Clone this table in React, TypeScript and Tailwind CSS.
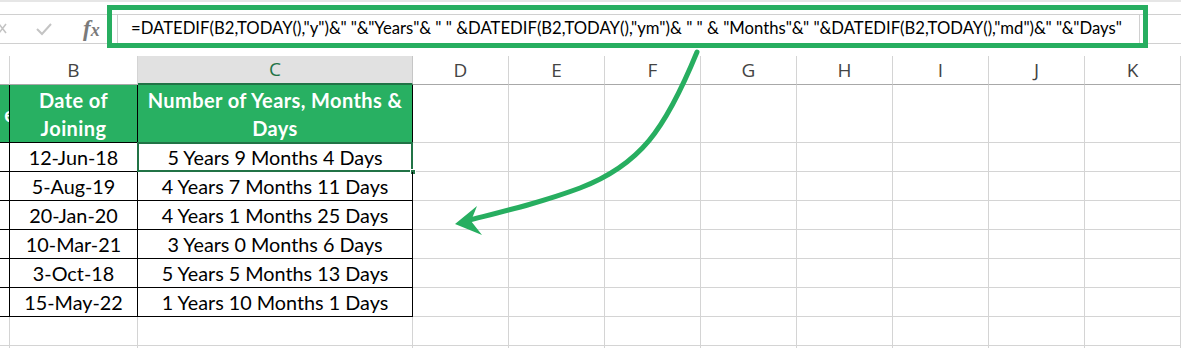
import React from "react";

const font = { fontFamily: "Lato, 'Open Sans', 'Liberation Sans', sans-serif" };

const FORMULA =
  '=DATEDIF(B2,TODAY(),"y")&" "&"Years"& " " &DATEDIF(B2,TODAY(),"ym")& " " & "Months"&" "&DATEDIF(B2,TODAY(),"md")&" "&"Days"';

const rows = [
  ["12-Jun-18", "5 Years 9 Months 4 Days"],
  ["5-Aug-19", "4 Years 7 Months 11 Days"],
  ["20-Jan-20", "4 Years 1 Months 25 Days"],
  ["10-Mar-21", "3 Years 0 Months 6 Days"],
  ["3-Oct-18", "5 Years 5 Months 13 Days"],
  ["15-May-22", "1 Years 10 Months 1 Days"],
];

const restCols = ["D", "E", "F", "G", "H", "I", "J", "K"];

function GridRest({ h }: { h: string }) {
  return (
    <>
      {restCols.map((c) => (
        <div key={c} className={`w-[96px] shrink-0 border-r border-b border-[#d4d4d4] ${h}`} />
      ))}
    </>
  );
}

function FormulaBar() {
  return (
    <div className="relative h-[56px]">
      <div className="h-[2px] bg-[#e6e6e6]" />
      <div className="mt-[12px] flex h-[30px] border-y border-[#d0d0d0]">
        <div className="flex w-[107px] shrink-0 items-center">
          <svg width="10" height="16" viewBox="0 0 10 16" className="-ml-[2px]">
            <path d="M1 3 L8 12 M8 3 L1 12" stroke="#c4c4c4" strokeWidth="1.6" fill="none" />
          </svg>
          <svg width="18" height="14" viewBox="0 0 18 14" className="ml-[27px]">
            <path d="M2 7 L7 12 L16 2" stroke="#c4c4c4" strokeWidth="2" fill="none" />
          </svg>
          <span
            className="ml-[30px] -mt-[2px] text-[23px] font-bold italic leading-none text-[#7a7a7a]"
            style={{ fontFamily: "'Liberation Serif', serif" }}
          >
            f<span className="text-[18px]">x</span>
          </span>
        </div>
        <div className="ml-[10px] flex w-[1023px] shrink-0 items-center border-l border-r border-[#d0d0d0] pl-[13px]">
          <span className="whitespace-nowrap text-[16.7px] text-black" style={font}>
            {FORMULA}
          </span>
        </div>
      </div>
      <div className="pointer-events-none absolute left-[107px] top-[5px] h-[43px] w-[1041px] border-[5px] border-[#27ae60]" />
    </div>
  );
}

function ColHeaders() {
  const letter = "text-[19px] text-[#444]";
  return (
    <div className="flex h-[29px] bg-white" style={{ fontFamily: "'Open Sans', sans-serif" }}>
      <div className="w-[10px] shrink-0 border-r border-b border-r-[#d4d4d4] border-b-[#a8a8a8]" />
      <div className={`flex w-[128px] shrink-0 items-center justify-center border-r border-b border-r-[#d4d4d4] border-b-[#a8a8a8] ${letter}`}>
        B
      </div>
      <div className="flex w-[275px] shrink-0 items-center justify-center border-r border-b-2 border-r-[#c6c6c6] border-b-[#217346] bg-[#e1e1e1] text-[19px] text-[#217346]">
        C
      </div>
      {restCols.map((c) => (
        <div
          key={c}
          className={`flex w-[96px] shrink-0 items-center justify-center border-r border-b border-r-[#d4d4d4] border-b-[#a8a8a8] ${letter}`}
        >
          {c}
        </div>
      ))}
    </div>
  );
}

export default function App() {
  return (
    <div className="relative h-[348px] w-[1181px] overflow-hidden bg-white">
      <FormulaBar />
      <ColHeaders />

      <div style={font}>
        <div className="flex h-[58px]">
          <div className="flex w-[10px] shrink-0 items-center justify-end overflow-hidden border-r border-b border-black bg-[#28b062] text-[20px] font-bold text-white">
            <span className="-mr-[6px]">e</span>
          </div>
          <div className="flex w-[128px] shrink-0 flex-col items-center justify-center border-r border-b border-black bg-[#28b062] text-[20px] font-bold leading-[28px] tracking-[0.4px] text-white">
            <span>Date of</span>
            <span>Joining</span>
          </div>
          <div className="flex w-[275px] shrink-0 flex-col items-center justify-center border-r border-b border-black bg-[#28b062] text-[20px] font-bold leading-[28px] tracking-[0.4px] text-white">
            <span>Number of Years, Months &amp;</span>
            <span>Days</span>
          </div>
          <GridRest h="h-[58px]" />
        </div>

        {rows.map(([d, v], i) => (
          <div key={d} className="flex h-[29px]">
            <div className="w-[10px] shrink-0 border-r border-b border-black" />
            <div className="flex w-[128px] shrink-0 items-center justify-center border-r border-b border-black pt-[2px] text-[19.8px] text-black">
              {d}
            </div>
            <div className="relative flex w-[275px] shrink-0 items-center justify-center border-r border-b border-black pt-[2px] text-[19.8px] text-black">
              {v}
              {i === 0 && (
                <>
                  <div className="pointer-events-none absolute -left-[1px] -top-[1px] -right-[1px] -bottom-[1px] border-2 border-[#217346]" />
                  <div className="absolute -bottom-[4px] -right-[4px] h-[6px] w-[6px] border border-white bg-[#217346]" />
                </>
              )}
            </div>
            <GridRest h="h-[29px]" />
          </div>
        ))}

        {[0, 1].map((k) => (
          <div key={k} className="flex h-[29px]">
            <div className="w-[10px] shrink-0 border-r border-b border-[#d4d4d4]" />
            <div className="w-[128px] shrink-0 border-r border-b border-[#d4d4d4]" />
            <div className="w-[275px] shrink-0 border-r border-b border-[#d4d4d4]" />
            <GridRest h="h-[29px]" />
          </div>
        ))}
      </div>

      <svg
        className="pointer-events-none absolute left-0 top-0"
        width="1181"
        height="348"
        viewBox="0 0 1181 348"
      >
        <path
          d="M697 52 C665 130 640 165 580 188 C540 203 505 211 466 221"
          stroke="#27ae60"
          strokeWidth="5"
          fill="none"
          strokeLinecap="round"
        />
        <polygon points="455,224 477,206 471,221 482,235" fill="#27ae60" />
      </svg>
    </div>
  );
}
